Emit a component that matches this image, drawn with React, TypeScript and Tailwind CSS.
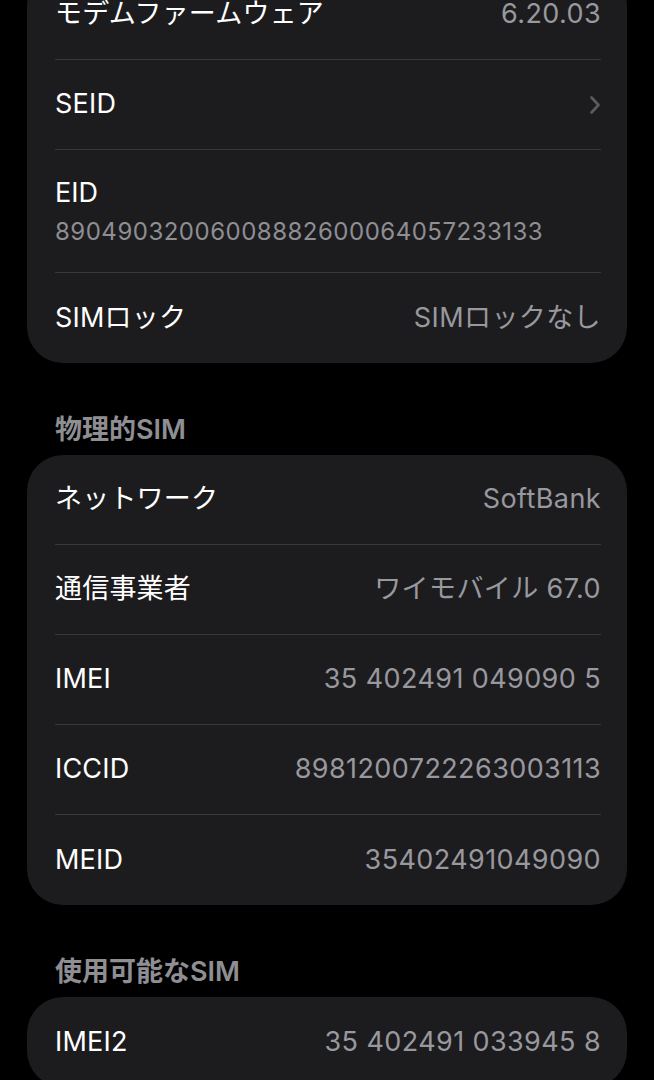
import React from "react";

type Row = { label: string; value?: string; chevron?: boolean };

const font = {
  fontFamily: '"Inter", "Noto Sans CJK JP", sans-serif',
};

const Chevron = () => (
  <svg width="12" height="20" viewBox="0 0 12 20" fill="none">
    <path d="M2.5 2.5 L9.5 10 L2.5 17.5" stroke="#5c5c60" strokeWidth="2.6" strokeLinecap="round" strokeLinejoin="round" />
  </svg>
);

const SimpleRow = ({ label, value, chevron }: Row) => (
  <div className="flex h-[90px] items-center justify-between">
    <span className="text-[27px] tracking-[0.2px] text-white">{label}</span>
    {chevron ? (
      <Chevron />
    ) : (
      <span className="text-[27px] tracking-[0.4px] text-[#98989e]">{value}</span>
    )}
  </div>
);

const Header = ({ children }: { children: React.ReactNode }) => (
  <div className="pl-[55px] pt-[52px] pb-[10px] text-[27px] leading-[30px] font-semibold text-[#8e8e93]">
    {children}
  </div>
);

const Card = ({ children }: { children: React.ReactNode }) => (
  <div className="mx-[27px] rounded-[36px] bg-[#1c1c1e] pl-[28px] pr-[26px]">
    <div className="divide-y divide-[#38383a]">{children}</div>
  </div>
);

export default function App() {
  return (
    <div className="min-h-screen w-full overflow-hidden bg-black" style={font}>
      <div className="-mt-[30px]">
        <Card>
          <SimpleRow label="モデムファームウェア" value="6.20.03" />
          <SimpleRow label="SEID" chevron />
          <div className="flex flex-col pt-[27px] pb-[25px]">
            <span className="text-[27px] leading-[32px] text-white">EID</span>
            <span className="mt-[8px] text-[24px] leading-[30px] tracking-[0.5px] text-[#8e8e93]">
              89049032006008882600064057233133
            </span>
          </div>
          <SimpleRow label="SIMロック" value="SIMロックなし" />
        </Card>
      </div>

      <Header>物理的SIM</Header>
      <Card>
        <SimpleRow label="ネットワーク" value="SoftBank" />
        <SimpleRow label="通信事業者" value="ワイモバイル 67.0" />
        <SimpleRow label="IMEI" value="35 402491 049090 5" />
        <SimpleRow label="ICCID" value="8981200722263003113" />
        <SimpleRow label="MEID" value="35402491049090" />
      </Card>

      <Header>使用可能なSIM</Header>
      <Card>
        <SimpleRow label="IMEI2" value="35 402491 033945 8" />
      </Card>
    </div>
  );
}
